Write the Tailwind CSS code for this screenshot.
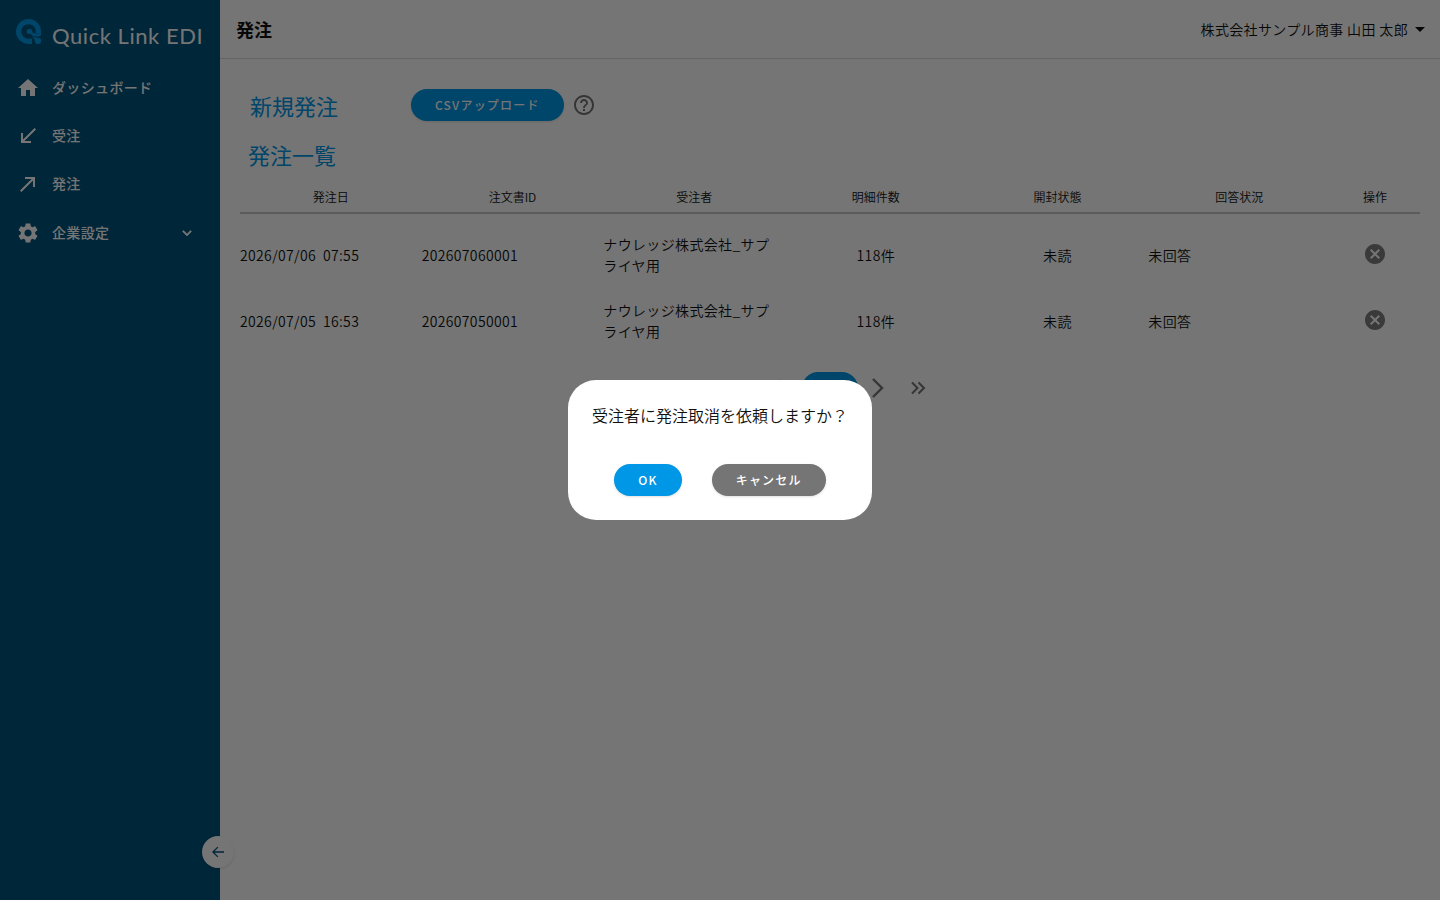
<!DOCTYPE html>
<html lang="ja">
<head>
  <meta charset="UTF-8">
  <meta name="viewport" content="width=device-width, initial-scale=1.0">
  <title>発注 | Quick Link EDI</title>
  <script src="https://cdn.jsdelivr.net/npm/@tailwindcss/browser@4"></script>
</head>
<body class="bg-white text-[#111] font-['Noto_Sans_CJK_JP',sans-serif]">
  <div class="flex min-h-screen">

    <!-- Sidebar -->
    <aside class="relative w-[220px] shrink-0 bg-[#00537c] text-white">
      <a href="#" class="flex items-center gap-2.5 h-16 pl-4">
        <svg class="w-[26px] h-[26px] shrink-0" viewBox="0 0 26 26">
          <path fill="none" stroke="#0097e6" stroke-width="5.200" d="M16 22.400h-3.500A9.900 9.900 0 1 1 22.400 12.500v1.500"/>
          <circle cx="13.500" cy="12.500" r="2.800" fill="#0097e6"/>
          <path stroke="#0097e6" stroke-width="2.600" d="m14 13 4.500 3.500"/>
          <path fill="#0097e6" d="M17.500 14c2 .6 3.500.6 7.500 0v1.800c0 1-1 1.700-2 1.700h-3.500c-1.500 0-2.500-1-3.500-2z"/>
          <path fill="#0097e6" d="M16.500 17c1.500 1.500 3 1.500 5.500 1.700a3.200 3.200 0 1 1-3.200 3.300c-.1-2-.8-3-2.300-4z"/>
        </svg>
        <span class="pt-2 font-[Lato] text-[22px] leading-none tracking-wide whitespace-nowrap">Quick Link EDI</span>
      </a>
      <nav class="text-sm font-medium tracking-wide">
        <a href="#" class="flex items-center h-12 pl-4">
          <svg class="w-6 h-6 mr-3" viewBox="0 0 24 24" fill="currentColor"><path d="M10 20v-6h4v6h5v-8h3L12 3 2 12h3v8z"/></svg>
          <span class="pb-0.5">ダッシュボード</span>
        </a>
        <a href="#" class="flex items-center h-12 pl-4">
          <svg class="w-6 h-6 mr-3" viewBox="0 0 24 24" fill="currentColor"><path d="M20 5.410 18.590 4 7 15.590V9H5v10h10v-2H8.410z"/></svg>
          <span class="pb-0.5">受注</span>
        </a>
        <a href="#" class="flex items-center h-12 pl-4">
          <svg class="w-6 h-6 mr-3" viewBox="0 0 24 24" fill="currentColor"><path d="M9 5v2h6.590L4 18.590 5.410 20 17 8.410V15h2V5z"/></svg>
          <span class="pb-0.5">発注</span>
        </a>
        <button type="button" class="flex items-center h-[50px] w-full pl-4 pr-6 font-medium tracking-wide">
          <svg class="w-6 h-6 mr-3" viewBox="0 0 24 24" fill="currentColor"><path d="M19.140 12.940c.04-.3.06-.61.06-.94 0-.32-.02-.64-.07-.94l2.030-1.580c.18-.14.23-.41.12-.61l-1.920-3.320c-.12-.22-.37-.29-.59-.22l-2.390.96c-.5-.38-1.030-.7-1.620-.94l-.36-2.540c-.04-.24-.24-.41-.48-.41h-3.840c-.24 0-.43.17-.47.41l-.36 2.540c-.59.24-1.130.57-1.620.94l-2.390-.96c-.22-.08-.47 0-.59.22L2.740 8.870c-.12.21-.08.47.12.61l2.030 1.580c-.05.3-.09.63-.09.94s.02.64.07.94l-2.030 1.580c-.18.14-.23.41-.12.61l1.920 3.320c.12.22.37.29.59.22l2.390-.96c.5.38 1.030.7 1.620.94l.36 2.540c.05.24.24.41.48.41h3.840c.24 0 .44-.17.47-.41l.36-2.540c.59-.24 1.130-.56 1.620-.94l2.390.96c.22.08.47 0 .59-.22l1.920-3.320c.12-.22.07-.47-.12-.61l-2.010-1.580zM12 15.600c-1.980 0-3.600-1.620-3.600-3.600s1.620-3.600 3.600-3.600 3.600 1.620 3.600 3.600-1.620 3.600-3.600 3.600z"/></svg>
          <span class="pb-0.5">企業設定</span>
          <svg class="w-[18px] h-[18px] ml-auto" viewBox="0 0 24 24" fill="currentColor" stroke="currentColor" stroke-width=".7"><path d="M7.410 8.590 12 13.170l4.590-4.580L18 10l-6 6-6-6z"/></svg>
        </button>
      </nav>
      <button type="button" aria-label="メニューを閉じる" class="absolute -right-3.5 bottom-8 flex items-center justify-center size-8 rounded-full bg-white text-[#00537c] shadow">
        <svg class="size-4" viewBox="0 0 24 24" fill="currentColor"><path d="M21 11H6.830l5.590-5.590L11 4l-8 8 8 8 1.410-1.410L6.830 13H21z"/></svg>
      </button>
    </aside>

    <div class="flex-1 min-w-0">
      <header class="flex items-center justify-between h-[59px] pl-4 pr-2 border-b border-[#dadada]">
        <h1 class="text-lg font-bold">発注</h1>
        <button type="button" class="flex items-center text-sm tracking-wide font-[350]">
          株式会社サンプル商事 山田 太郎
          <svg class="size-6" viewBox="0 0 24 24" fill="currentColor"><path d="m7 10 5 5 5-5z"/></svg>
        </button>
      </header>

      <main class="px-5 pt-[30px]">
        <div class="flex items-center h-8">
          <h2 class="w-[171px] pl-2.5 text-[22px] leading-8 text-[#0097e6]">新規発注</h2>
          <button type="button" class="h-8 px-6 rounded-full bg-[#0097e6] text-white text-xs font-medium tracking-widest shadow">CSVアップロード</button>
          <button type="button" aria-label="ヘルプ" class="ml-2 text-[#757575]">
            <svg class="size-6" viewBox="0 0 24 24" fill="currentColor"><path d="M11 18h2v-2h-2v2zm1-16C6.480 2 2 6.480 2 12s4.480 10 10 10 10-4.480 10-10S17.520 2 12 2zm0 18c-4.410 0-8-3.590-8-8s3.590-8 8-8 8 3.590 8 8-3.590 8-8 8zm0-14c-2.210 0-4 1.790-4 4h2c0-1.100.9-2 2-2s2 .9 2 2c0 2-3 1.750-3 5h2c0-2.250 3-2.500 3-5 0-2.210-1.790-4-4-4z"/></svg>
          </button>
        </div>
        <h2 class="mt-[17px] pl-2 text-[22px] leading-8 text-[#0097e6]">発注一覧</h2>

        <table class="mt-3 w-full table-fixed text-sm font-[350] tracking-wide">
          <thead>
            <tr class="h-[31px] border-b-2 border-[#c8c8c8] text-xs">
              <th class="font-[350] tracking-normal">発注日</th>
              <th class="font-[350] tracking-normal">注文書ID</th>
              <th class="font-[350] tracking-normal">受注者</th>
              <th class="font-[350] tracking-normal">明細件数</th>
              <th class="font-[350] tracking-normal">開封状態</th>
              <th class="font-[350] tracking-normal">回答状況</th>
              <th class="w-[90px] font-[350] tracking-normal">操作</th>
            </tr>
          </thead>
          <tbody>
            <tr class="h-[82px]">
              <td>2026/07/06&nbsp; 07:55</td>
              <td>202607060001</td>
              <td class="pr-2 leading-[21px]">ナウレッジ株式会社_サプライヤ用</td>
              <td class="text-center">118件</td>
              <td class="text-center">未読</td>
              <td>未回答</td>
              <td>
                <button type="button" aria-label="発注取消" class="block mx-auto mb-0.5 text-[#7e7e7e]">
                  <svg class="size-6" viewBox="0 0 24 24" fill="currentColor"><path d="M12 2C6.470 2 2 6.470 2 12s4.470 10 10 10 10-4.470 10-10S17.530 2 12 2zm5 13.590L15.590 17 12 13.410 8.410 17 7 15.590 10.590 12 7 8.410 8.410 7 12 10.590 15.590 7 17 8.410 13.410 12z"/></svg>
                </button>
              </td>
            </tr>
            <tr class="h-[52px]">
              <td>2026/07/05&nbsp; 16:53</td>
              <td>202607050001</td>
              <td class="pr-2 leading-[21px]">ナウレッジ株式会社_サプライヤ用</td>
              <td class="text-center">118件</td>
              <td class="text-center">未読</td>
              <td>未回答</td>
              <td>
                <button type="button" aria-label="発注取消" class="block mx-auto mb-0.5 text-[#7e7e7e]">
                  <svg class="size-6" viewBox="0 0 24 24" fill="currentColor"><path d="M12 2C6.470 2 2 6.470 2 12s4.470 10 10 10 10-4.470 10-10S17.530 2 12 2zm5 13.590L15.590 17 12 13.410 8.410 17 7 15.590 10.590 12 7 8.410 8.410 7 12 10.590 15.590 7 17 8.410 13.410 12z"/></svg>
                </button>
              </td>
            </tr>
          </tbody>
        </table>

        <!-- Pagination -->
        <div class="flex items-center justify-center mt-[25px] h-8 text-[#757575]">
          <button type="button" aria-label="最初のページ" class="w-10 flex justify-center">
            <svg class="size-6" viewBox="0 0 24 24" fill="none" stroke="currentColor" stroke-width="1.500"><path d="m11 7-5 5 5 5M18 7l-5 5 5 5"/></svg>
          </button>
          <button type="button" aria-label="前のページ" class="w-10 flex justify-center">
            <svg class="size-6" viewBox="0 0 24 24" fill="none" stroke="currentColor" stroke-width="1.500"><path d="m10 4-8 8 8 8"/></svg>
          </button>
          <button type="button" aria-label="1ページ" class="w-14 h-8 rounded-full bg-[#0097e6]"></button>
          <button type="button" aria-label="次のページ" class="w-10 flex justify-center">
            <svg class="size-6" viewBox="0 0 24 24" fill="none" stroke="currentColor" stroke-width="2.400"><path d="m7 3 9 9-9 9"/></svg>
          </button>
          <button type="button" aria-label="最後のページ" class="w-10 flex justify-center">
            <svg class="size-6" viewBox="0 0 24 24" fill="none" stroke="currentColor" stroke-width="2"><path d="m6 6.500 5.500 5.500L6 17.500M12.500 6.500l5.500 5.500-5.500 5.500"/></svg>
          </button>
        </div>
      </main>
    </div>
  </div>

  <!-- Cancel request dialog -->
  <div class="fixed inset-0 flex items-center justify-center bg-black/54">
    <div role="dialog" aria-modal="true" aria-labelledby="dialog_title" class="bg-white rounded-[28px] p-6">
      <p id="dialog_title" class="text-base leading-[22px] font-[350]">受注者に発注取消を依頼しますか？</p>
      <div class="flex justify-center gap-[30px] mt-[38px]">
        <button type="button" class="h-8 px-6 rounded-full bg-[#0097e6] text-white text-xs font-medium tracking-widest shadow">OK</button>
        <button type="button" class="h-8 px-6 rounded-full bg-[#757575] text-white text-xs font-medium tracking-widest shadow">キャンセル</button>
      </div>
    </div>
  </div>
</body>
</html>
